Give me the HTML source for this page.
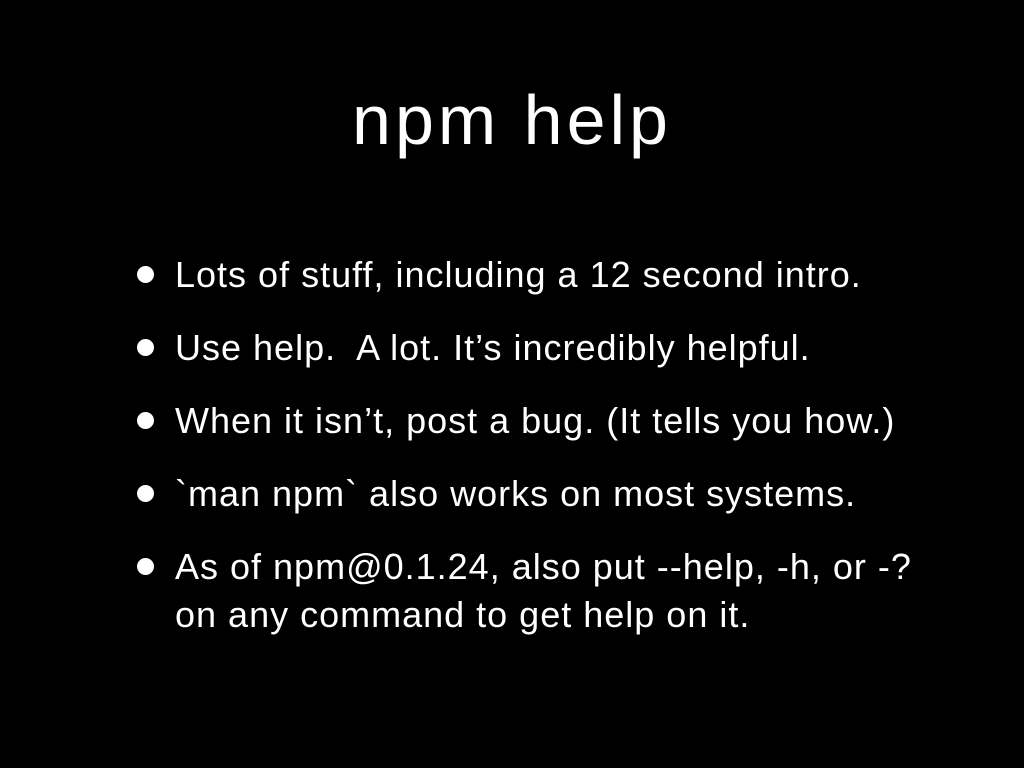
<!DOCTYPE html>
<html><head><meta charset="utf-8"><style>
html,body{margin:0;padding:0;background:#000;}
body{width:1024px;height:768px;position:relative;overflow:hidden;color:#fff;font-family:"Liberation Sans",sans-serif;}
.t{position:absolute;left:0;width:1024px;text-align:center;top:80px;font-size:70px;line-height:80px;letter-spacing:4px;}
.l{position:absolute;left:175px;font-size:36px;line-height:40px;white-space:nowrap;letter-spacing:1px;}
.d{position:absolute;left:137px;width:17px;height:17px;border-radius:50%;background:#fff;}
</style></head><body>
<div class="t">npm help</div>
<div class="d" style="top:266px"></div><div class="l" style="top:255px">Lots of stuff, including a 12 second intro.</div>
<div class="d" style="top:339px"></div><div class="l" style="top:328px">Use help.&nbsp; A lot. It’s incredibly helpful.</div>
<div class="d" style="top:412px"></div><div class="l" style="top:401px">When it isn’t, post a bug. (It tells you how.)</div>
<div class="d" style="top:485px"></div><div class="l" style="top:474px">`man npm` also works on most systems.</div>
<div class="d" style="top:558px"></div><div class="l" style="top:547px">As of npm@0.1.24, also put --help, -h, or -?</div>
<div class="l" style="top:595px">on any command to get help on it.</div>
</body></html>
